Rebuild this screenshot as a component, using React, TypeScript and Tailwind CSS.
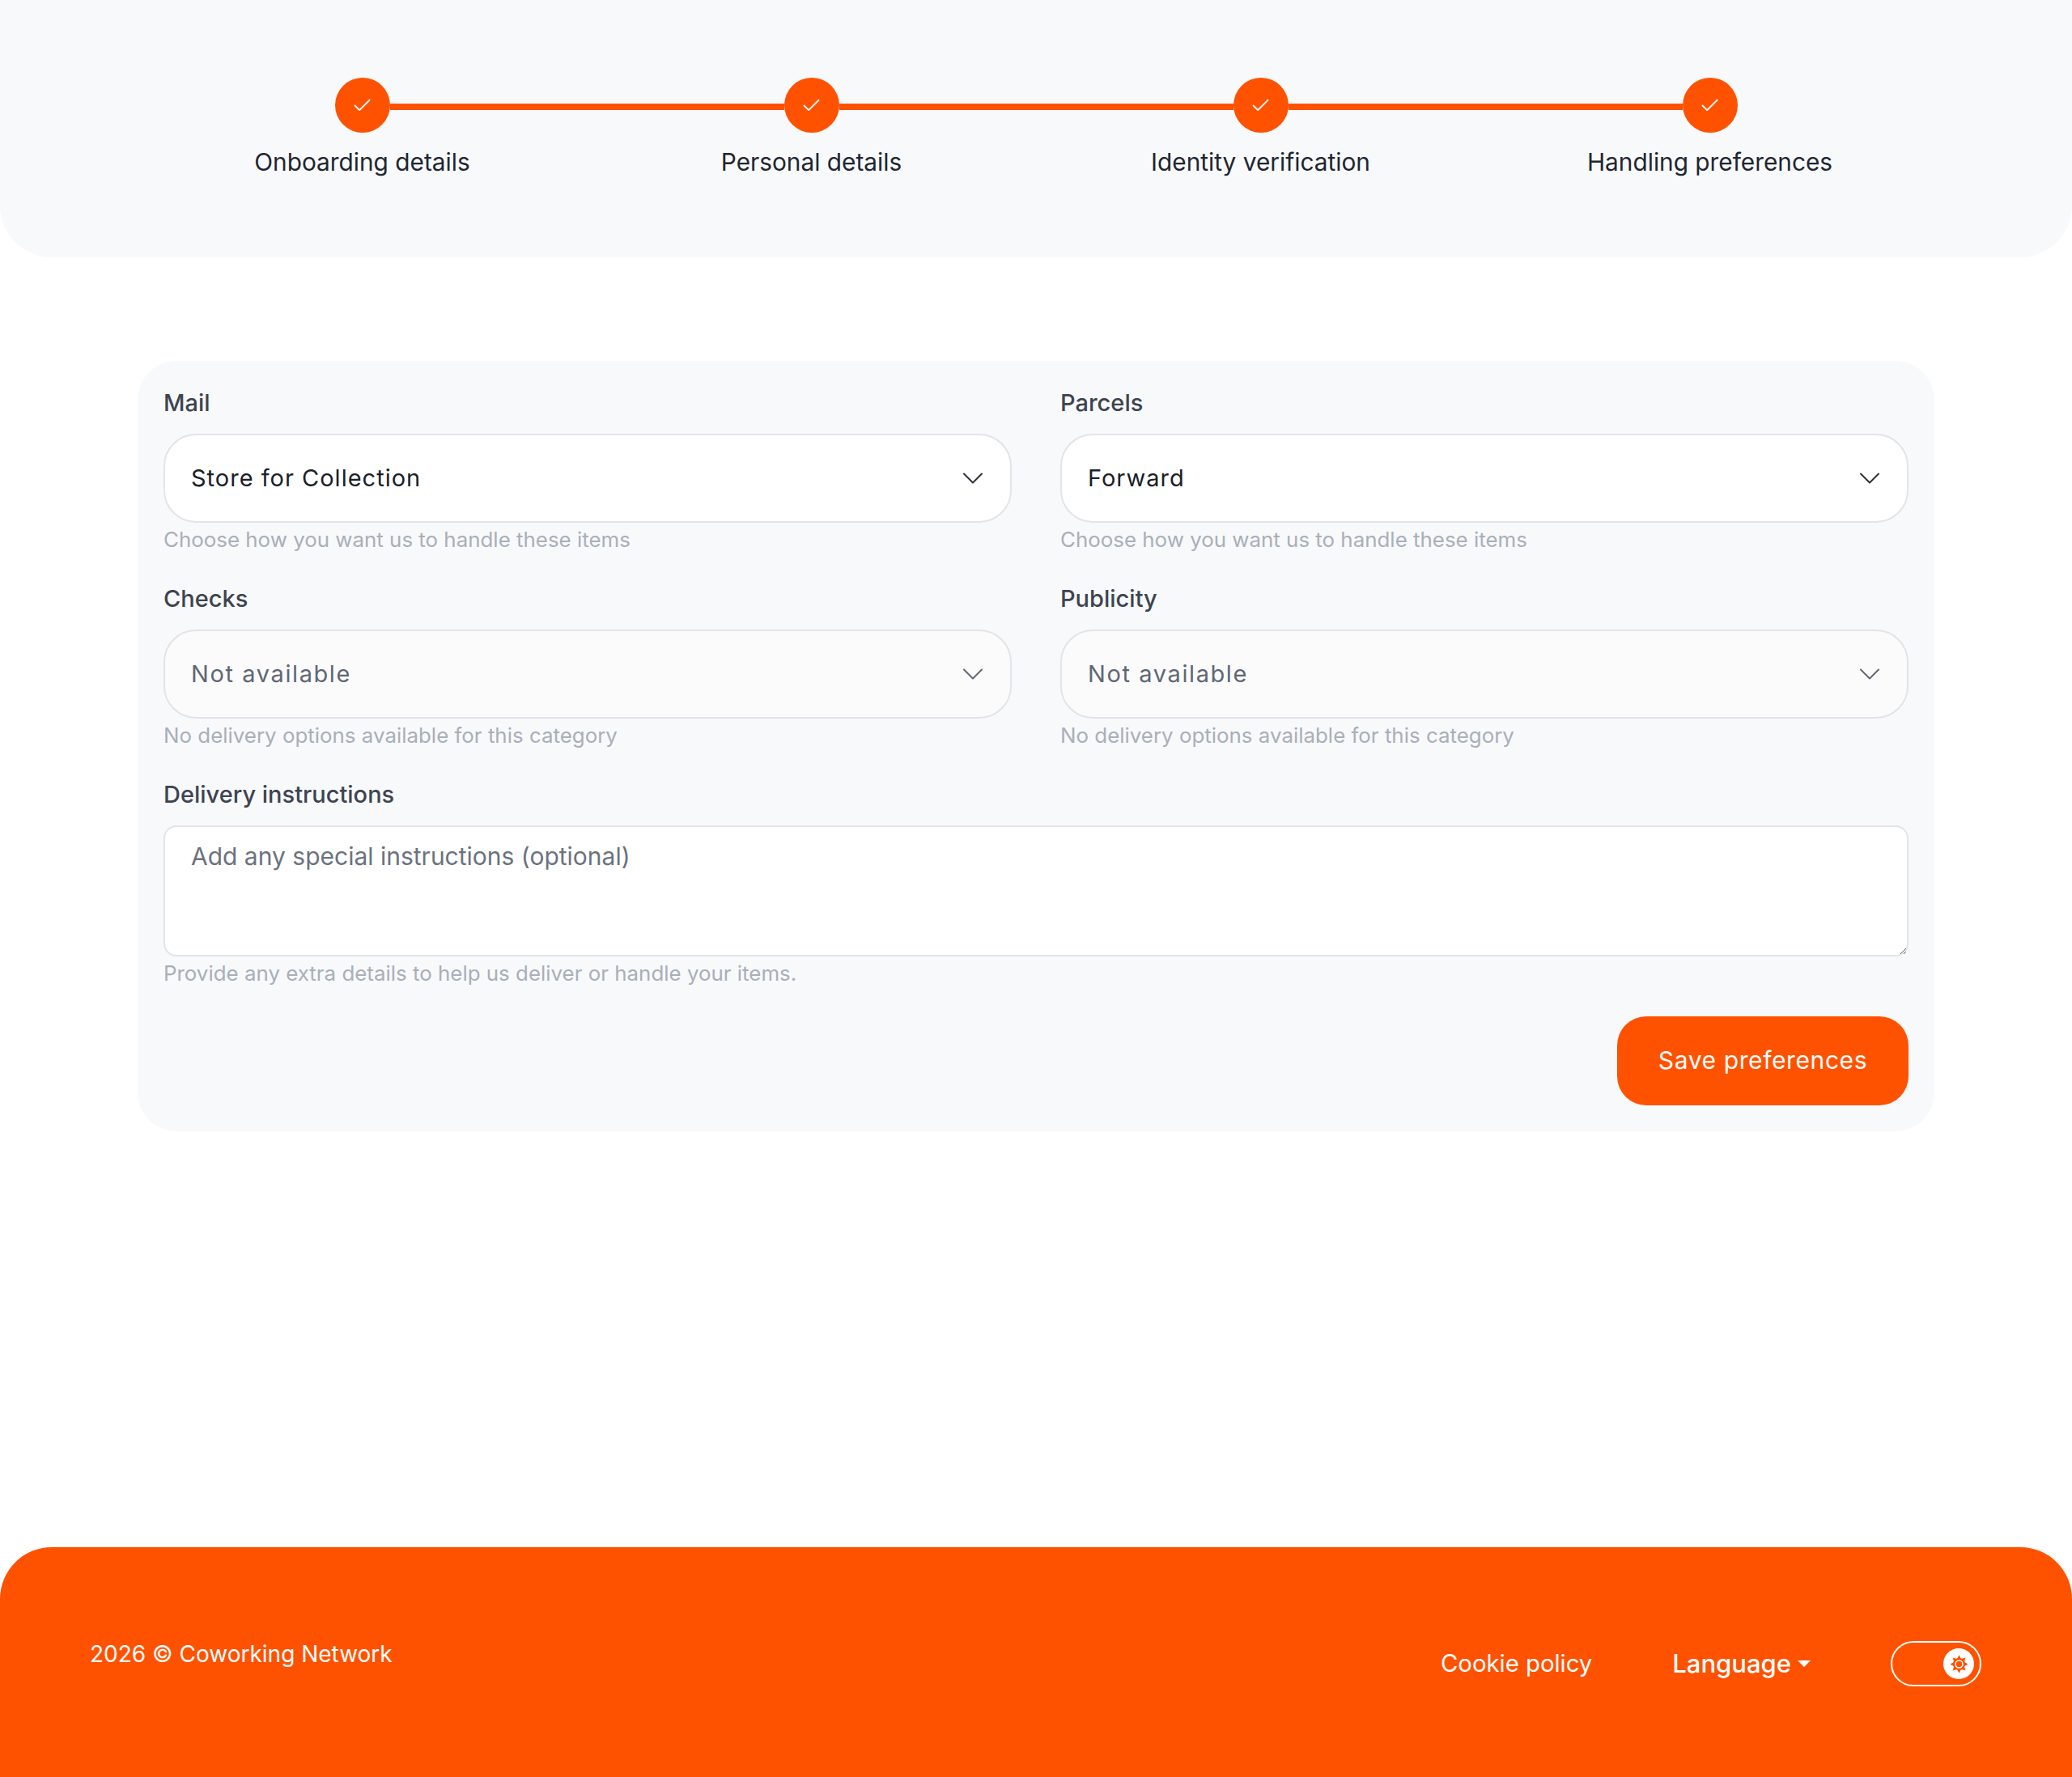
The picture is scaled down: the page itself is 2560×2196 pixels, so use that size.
import { Check, ChevronDown } from 'lucide-react'

const STEPS = ['Onboarding details', 'Personal details', 'Identity verification', 'Handling preferences']

function SunIcon() {
  const rays = [0, 45, 90, 135, 180, 225, 270, 315]
  return (
    <svg width="25" height="25" viewBox="0 0 28 28" fill="none">
      {rays.map(r => (
        <path key={r} d="M14 1.5 L17.5 8 L10.5 8 Z" fill="#ff5200" transform={`rotate(${r} 14 14)`} />
      ))}
      <circle cx="14" cy="14" r="8.5" fill="#ff5200" />
      <circle cx="14" cy="14" r="5" fill="#ff5200" stroke="#fff" strokeWidth="1.8" />
    </svg>
  )
}

function Stepper() {
  return (
    <div className="h-[318px] rounded-b-[64px] bg-[#f8f9fb] px-[170px] pt-[96px]">
      <div className="grid grid-cols-4">
        {STEPS.map((label, i) => (
          <div key={label} className="flex flex-col items-center">
            <div className="flex w-full items-start">
              <div className={`mt-[32px] h-[8px] flex-1 ${i === 0 ? '' : 'bg-[#ff5200]'}`} />
              <div className="flex h-[68px] w-[68px] items-center justify-center rounded-full bg-[#ff5200]">
                <Check size={27} strokeWidth={1.6} className="text-white" />
              </div>
              <div className={`mt-[32px] h-[8px] flex-1 ${i === 3 ? '' : 'bg-[#ff5200]'}`} />
            </div>
            <span className="mt-[16px] text-[29.8px] leading-[40px] text-[#1f2630]">{label}</span>
          </div>
        ))}
      </div>
    </div>
  )
}

function SelectField({ label, value, hint, disabled }: { label: string; value: string; hint: string; disabled?: boolean }) {
  return (
    <div>
      <div className="mb-[18px] text-[29px] font-medium leading-[40px] text-[#3d4450]">{label}</div>
      <div
        className={[
          'flex h-[110px] items-center justify-between rounded-[40px] border-2 border-[#e2e4e9] pl-[32px] pr-[24px]',
          disabled ? 'bg-[#fbfbfc]' : 'bg-white',
        ].join(' ')}
      >
        <span className={`text-[29px] ${disabled ? 'tracking-[1.6px] text-[#5f6773]' : 'tracking-[1px] text-[#1a2029]'}`}>{value}</span>
        <ChevronDown size={44} strokeWidth={1.1} className={disabled ? 'text-[#5f6773]' : 'text-[#2a3039]'} />
      </div>
      <div className="text-[25.9px] leading-[42px] text-[#a9afb9]">{hint}</div>
    </div>
  )
}

export default function App() {
  return (
    <div className="flex min-h-screen flex-col bg-white font-['Inter',sans-serif]">
      <Stepper />

      <div className="mx-[170px] mt-[128px] rounded-[48px] bg-[#f8f9fb] p-[32px]">
        <div className="grid grid-cols-2 gap-x-[60px] gap-y-[32px]">
          <SelectField label="Mail" value="Store for Collection" hint="Choose how you want us to handle these items" />
          <SelectField label="Parcels" value="Forward" hint="Choose how you want us to handle these items" />
          <SelectField label="Checks" value="Not available" hint="No delivery options available for this category" disabled />
          <SelectField label="Publicity" value="Not available" hint="No delivery options available for this category" disabled />
        </div>

        <div className="mt-[32px] mb-[18px] text-[29px] font-medium leading-[40px] text-[#3d4450]">Delivery instructions</div>
        <textarea
          placeholder="Add any special instructions (optional)"
          className="block h-[162px] w-full rounded-[16px] border-2 border-[#e2e4e9] bg-white px-[32px] py-[16px] text-[30px] leading-[40px] text-[#1a2029] outline-none placeholder:text-[#6b7280]"
        />
        <div className="text-[25.9px] leading-[42px] text-[#a9afb9]">Provide any extra details to help us deliver or handle your items.</div>

        <div className="mt-[32px] flex justify-end">
          <button className="h-[110px] w-[360px] rounded-[36px] bg-[#ff5200] pb-[2px] text-[30px] tracking-[0.6px] text-white">
            Save preferences
          </button>
        </div>
      </div>

      <footer className="mt-auto flex h-[284px] items-start justify-between rounded-t-[64px] bg-[#ff5200] pl-[111px] pr-[112px] pt-[112px] text-white">
        <span className="text-[28px] leading-[40px]">2026 © Coworking Network</span>
        <div className="mt-[4px] flex items-center gap-[99px]">
          <span className="text-[29.3px] leading-[40px]">Cookie policy</span>
          <span className="flex items-center gap-[8px] text-[31px] font-medium leading-[40px]">
            Language
            <span className="h-0 w-0 border-x-[8px] border-t-[8px] border-x-transparent border-t-white" />
          </span>
          <div className="flex h-[56px] w-[112px] items-center justify-end rounded-full border-2 border-white pr-[7px]">
            <div className="flex h-[38px] w-[38px] items-center justify-center rounded-full bg-white">
              <SunIcon />
            </div>
          </div>
        </div>
      </footer>
    </div>
  )
}
